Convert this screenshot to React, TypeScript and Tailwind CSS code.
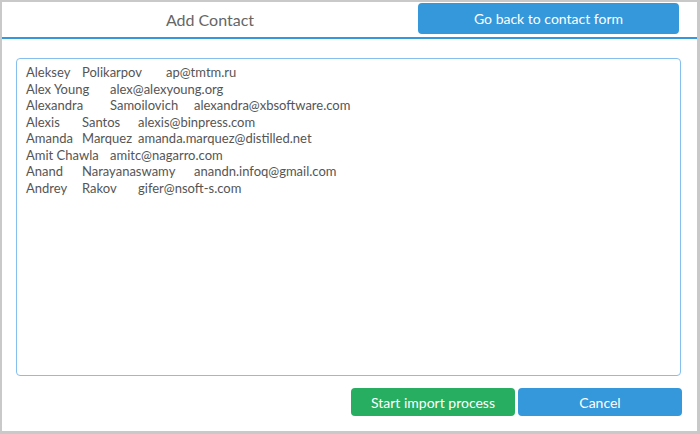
import React, { useEffect, useRef } from "react";

const TEXT = [
  "Aleksey\tPolikarpov\tap@tmtm.ru",
  "Alex Young\talex@alexyoung.org",
  "Alexandra\tSamoilovich\talexandra@xbsoftware.com",
  "Alexis\tSantos\talexis@binpress.com",
  "Amanda\tMarquez\tamanda.marquez@distilled.net",
  "Amit Chawla\tamitc@nagarro.com",
  "Anand\tNarayanaswamy\tanandn.infoq@gmail.com",
  "Andrey\tRakov\tgifer@nsoft-s.com",
].join("\n");

export default function App() {
  const ref = useRef<HTMLTextAreaElement>(null);
  useEffect(() => {
    const el = ref.current;
    if (el) {
      el.focus();
      el.setSelectionRange(TEXT.length, TEXT.length);
    }
  }, []);
  return (
    <div className="w-[700px] h-[434px] box-border bg-white border-l-2 border-t-2 border-r-[3px] border-b-[3px] border-[#c9c9c9] flex flex-col font-['Lato','Liberation_Sans',sans-serif]">
      <div className="h-[37px] flex items-start border-b-2 border-[#3498db] shrink-0">
        <div className="flex-1 h-[35px] flex items-center justify-center text-[16px] text-[#666666]">
          Add Contact
        </div>
        <button className="mt-[1px] mr-[18px] w-[261px] h-[31px] rounded-[4px] bg-[#3498db] text-white text-[14px] flex items-center justify-center">
          Go back to contact form
        </button>
      </div>
      <div className="flex-1 flex flex-col pl-[14px] pr-[16px] pt-[19px] pb-[15px]">
        <textarea
          ref={ref}
          defaultValue={TEXT}
          spellCheck={false}
          className="h-[318px] w-full resize-none rounded-[4px] border border-[#86bfee] outline-none px-[9px] pt-[5px] text-[13px] leading-[16.5px] text-[#555555] [tab-size:28px] caret-[#333333] font-['Lato','Liberation_Sans',sans-serif]"
        />
        <div className="mt-[12px] flex justify-end gap-[3px] mr-[-1px]">
          <button className="w-[164px] h-[28px] rounded-[4px] bg-[#27ae60] text-white text-[14px] flex items-center justify-center">
            Start import process
          </button>
          <button className="w-[164px] h-[28px] rounded-[4px] bg-[#3498db] text-white text-[14px] flex items-center justify-center">
            Cancel
          </button>
        </div>
      </div>
    </div>
  );
}
